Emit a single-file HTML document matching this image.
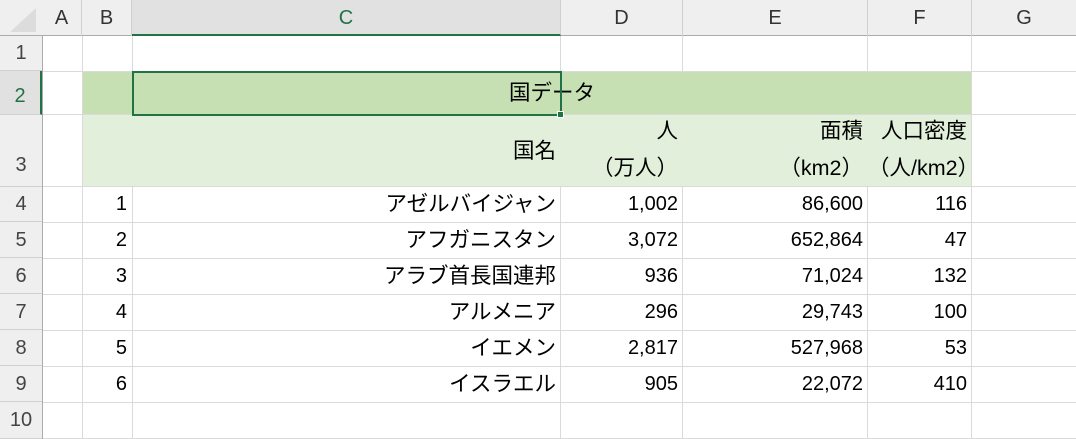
<!DOCTYPE html>
<html><head><meta charset="utf-8"><style>
*{margin:0;padding:0;box-sizing:border-box}
body{width:1076px;height:439px;overflow:hidden;background:#fff;font-family:"Liberation Sans","Noto Sans CJK JP",sans-serif;position:relative;color:#000}
.a{position:absolute}
.vl{position:absolute;top:36px;bottom:0;width:1px;background:#dadada}
.hl{position:absolute;left:42px;right:0;height:1px;background:#dadada}
.ch{position:absolute;top:0;height:36px;line-height:36px;text-align:center;font-size:20px;color:#333;border-right:1px solid #d0d0d0}
.rh{position:absolute;left:0;width:42px;text-align:center;font-size:20px;color:#444;border-bottom:1px solid #d0d0d0}
.c{position:absolute;font-size:20px;text-align:right;padding-right:5px;line-height:36px}
.j{font-size:21.5px;letter-spacing:0}
</style></head><body>
<div class="a" style="left:82px;top:71px;width:890px;height:44px;background:#c6e0b4"></div>
<div class="a" style="left:82px;top:115px;width:890px;height:72px;background:#e2efda"></div>
<div class="vl" style="left:82px"></div>
<div class="vl" style="left:132px"></div>
<div class="vl" style="left:560px"></div>
<div class="vl" style="left:682px"></div>
<div class="vl" style="left:867px"></div>
<div class="vl" style="left:971px"></div>
<div class="hl" style="top:71px"></div>
<div class="hl" style="top:114px"></div>
<div class="hl" style="top:186px"></div>
<div class="hl" style="top:222px"></div>
<div class="hl" style="top:258px"></div>
<div class="hl" style="top:294px"></div>
<div class="hl" style="top:330px"></div>
<div class="hl" style="top:366px"></div>
<div class="hl" style="top:402px"></div>
<div class="hl" style="top:438px"></div>
<div class="a" style="left:83px;top:72px;width:888px;height:42px;background:#c6e0b4"></div>
<div class="a" style="left:83px;top:115px;width:888px;height:71px;background:#e2efda"></div>
<div class="a" style="left:0;top:0;width:1076px;height:36px;background:#efefef;border-bottom:1px solid #ababab"></div>
<svg class="a" style="left:8px;top:6px" width="30" height="28"><polygon points="28,2 28,26 2,26" fill="#dcdcdc"/></svg>
<div class="ch" style="left:42px;width:40px">A</div>
<div class="ch" style="left:82px;width:50px">B</div>
<div class="ch" style="left:132px;width:429px;background:#e1e1e1;color:#217346;border-bottom:2px solid #217346;height:36px">C</div>
<div class="ch" style="left:561px;width:122px">D</div>
<div class="ch" style="left:683px;width:185px">E</div>
<div class="ch" style="left:868px;width:104px">F</div>
<div class="ch" style="left:972px;width:104px;border-right:none">G</div>
<div class="a" style="left:0;top:36px;width:43px;height:403px;background:#efefef;border-right:1px solid #ababab"></div>
<div class="rh" style="top:36px;height:35px;line-height:35px">1</div>
<div class="rh" style="top:71px;height:44px;line-height:50px;background:#e1e1e1;color:#217346;border-right:2px solid #217346">2</div>
<div class="rh" style="top:115px;height:72px;line-height:100px">3</div>
<div class="rh" style="top:187px;height:35px;line-height:35px">4</div>
<div class="rh" style="top:222px;height:36px;line-height:36px">5</div>
<div class="rh" style="top:258px;height:36px;line-height:36px">6</div>
<div class="rh" style="top:294px;height:36px;line-height:36px">7</div>
<div class="rh" style="top:330px;height:36px;line-height:36px">8</div>
<div class="rh" style="top:366px;height:36px;line-height:36px">9</div>
<div class="rh" style="top:402px;height:37px;line-height:37px">10</div>
<div class="a j" style="left:132px;top:71px;width:840px;height:44px;line-height:44px;text-align:center">国データ</div>
<div class="a" style="left:132px;top:71px;width:430px;height:45px;border:2px solid #217346"></div>
<div class="a" style="left:557px;top:111px;width:7px;height:7px;background:#217346;border:1px solid #fff"></div>
<div class="c j" style="left:132px;top:115px;width:429px;height:72px;line-height:72px">国名</div>
<div class="c j" style="left:561px;top:113px;width:122px;line-height:37px">人<br>（万人）</div>
<div class="c j" style="left:683px;top:113px;width:185px;line-height:37px">面積<br>（km2）</div>
<div class="c j" style="left:868px;top:113px;width:104px;line-height:37px;white-space:nowrap">人口密度<br>（人/km2）</div>
<div class="c" style="left:82px;top:186px;width:50px">1</div>
<div class="c j" style="left:132px;top:186px;width:429px">アゼルバイジャン</div>
<div class="c" style="left:561px;top:186px;width:122px">1,002</div>
<div class="c" style="left:683px;top:186px;width:185px">86,600</div>
<div class="c" style="left:868px;top:186px;width:104px">116</div>
<div class="c" style="left:82px;top:222px;width:50px">2</div>
<div class="c j" style="left:132px;top:222px;width:429px">アフガニスタン</div>
<div class="c" style="left:561px;top:222px;width:122px">3,072</div>
<div class="c" style="left:683px;top:222px;width:185px">652,864</div>
<div class="c" style="left:868px;top:222px;width:104px">47</div>
<div class="c" style="left:82px;top:258px;width:50px">3</div>
<div class="c j" style="left:132px;top:258px;width:429px">アラブ首長国連邦</div>
<div class="c" style="left:561px;top:258px;width:122px">936</div>
<div class="c" style="left:683px;top:258px;width:185px">71,024</div>
<div class="c" style="left:868px;top:258px;width:104px">132</div>
<div class="c" style="left:82px;top:294px;width:50px">4</div>
<div class="c j" style="left:132px;top:294px;width:429px">アルメニア</div>
<div class="c" style="left:561px;top:294px;width:122px">296</div>
<div class="c" style="left:683px;top:294px;width:185px">29,743</div>
<div class="c" style="left:868px;top:294px;width:104px">100</div>
<div class="c" style="left:82px;top:330px;width:50px">5</div>
<div class="c j" style="left:132px;top:330px;width:429px">イエメン</div>
<div class="c" style="left:561px;top:330px;width:122px">2,817</div>
<div class="c" style="left:683px;top:330px;width:185px">527,968</div>
<div class="c" style="left:868px;top:330px;width:104px">53</div>
<div class="c" style="left:82px;top:366px;width:50px">6</div>
<div class="c j" style="left:132px;top:366px;width:429px">イスラエル</div>
<div class="c" style="left:561px;top:366px;width:122px">905</div>
<div class="c" style="left:683px;top:366px;width:185px">22,072</div>
<div class="c" style="left:868px;top:366px;width:104px">410</div>
</body></html>
